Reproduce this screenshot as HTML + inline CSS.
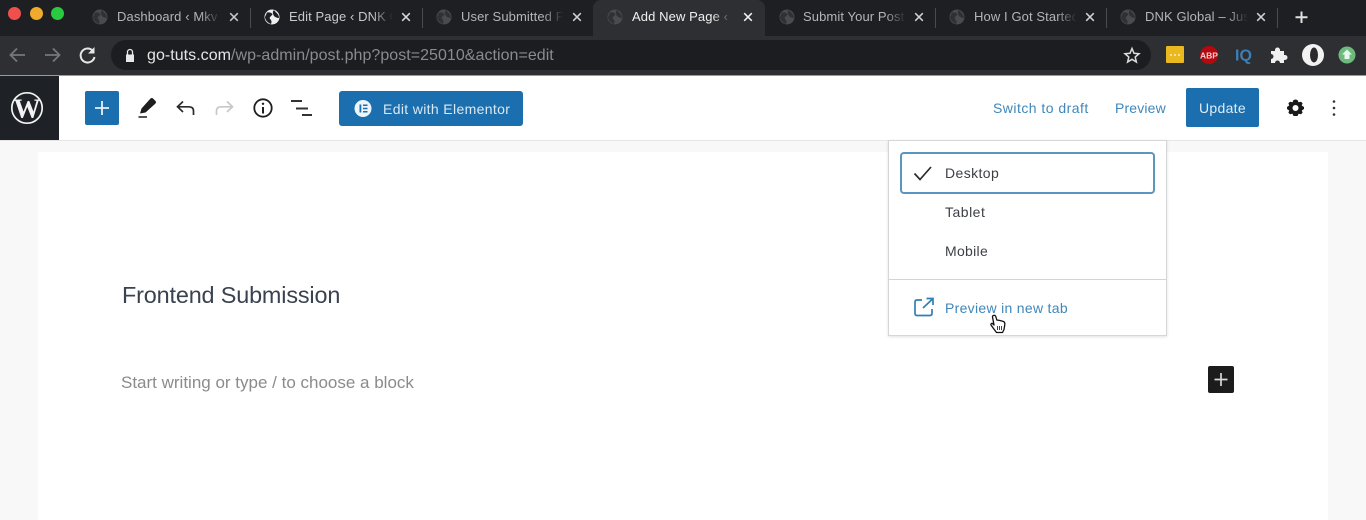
<!DOCTYPE html>
<html>
<head>
<meta charset="utf-8">
<style>
html,body{margin:0;padding:0;width:1366px;height:520px;overflow:hidden;background:#f8f8f8;font-family:"Liberation Sans",sans-serif}
#w{position:absolute;left:0;top:0;width:1366px;height:520px;overflow:hidden;background:#f8f8f8;filter:blur(.35px)}
.a{position:absolute}
.t{position:absolute;white-space:nowrap}
svg{position:absolute;overflow:visible}
.tab{position:absolute;top:9px;font-size:13px;letter-spacing:.1px;line-height:16px;color:#b4b5b8;white-space:nowrap;overflow:hidden;-webkit-mask-image:linear-gradient(to right,#000 80%,transparent);mask-image:linear-gradient(to right,#000 80%,transparent)}
.sep{position:absolute;top:8px;width:1px;height:20px;background:#4a4b4e}
</style>
</head>
<body>
<div id="w">
<div class="a" style="left:0;top:0;width:1366px;height:36px;background:#1e1f22"></div>
<div class="a" style="left:0;top:36px;width:1366px;height:39px;background:#2e2f32"></div>
<div class="a" style="left:593px;top:0;width:172px;height:40px;background:#2e2f32;border-radius:8px 8px 0 0"></div>

<div class="a" style="left:8px;top:7px;width:13px;height:13px;border-radius:50%;background:#f0504c"></div>
<div class="a" style="left:30px;top:7px;width:13px;height:13px;border-radius:50%;background:#f1ab2c"></div>
<div class="a" style="left:51px;top:7px;width:13px;height:13px;border-radius:50%;background:#2ac940"></div>

<svg style="left:0;top:0" width="1366" height="36">
<defs>
<path id="c" d="M-5-4.500C-2-5 0-4 .5-2.500-1-.5-3 0-2 2-.5 3 0 5-1 7-4 6-7 3-7 0ZM2-7C4-4 7-3 7 1 5 1 3 0 2-1 1-3 0-5 2-7Z"/>
<g id="g"><circle r="7.500" fill="#4a4b4e"/><use href="#c" fill="#303134"/></g>
<g id="ga"><circle r="7.500" fill="#f0f0f0"/><use href="#c" fill="#1e1f22"/></g>
<path id="x" d="M-3.800-3.800L3.800 3.800M3.800-3.800L-3.800 3.800" stroke-width="1.500" fill="none"/>
</defs>
<use href="#g" x="100" y="17"/>
<use href="#ga" x="272" y="17"/>
<use href="#g" x="444" y="17"/>
<use href="#g" x="615" y="17"/>
<use href="#g" x="787" y="17"/>
<use href="#g" x="957" y="17"/>
<use href="#g" x="1128" y="17"/>
<use href="#x" x="234" y="17" stroke="#c8c9cb"/>
<use href="#x" x="406" y="17" stroke="#d8d9db"/>
<use href="#x" x="577" y="17" stroke="#d0d1d3"/>
<use href="#x" x="748" y="17" stroke="#f0f0f0"/>
<use href="#x" x="919" y="17" stroke="#d0d1d3"/>
<use href="#x" x="1090" y="17" stroke="#d0d1d3"/>
<use href="#x" x="1261" y="17" stroke="#d0d1d3"/>
<path d="M1301.500 11.500V23M1295.500 17.200H1307.500" stroke="#e0e0e0" stroke-width="2" fill="none"/>
</svg>

<div class="tab" style="left:117px;width:104px">Dashboard ‹ Mkv Site</div>
<div class="tab" style="left:289px;width:104px;color:#c8c9cb">Edit Page ‹ DNK Global</div>
<div class="tab" style="left:461px;width:102px">User Submitted Posts</div>
<div class="tab" style="left:632px;width:100px;color:#f0f0f0">Add New Page ‹ DNK</div>
<div class="tab" style="left:803px;width:103px">Submit Your Post Here</div>
<div class="tab" style="left:974px;width:103px">How I Got Started With</div>
<div class="tab" style="left:1145px;width:103px">DNK Global – Just Another</div>
<div class="sep" style="left:250px"></div>
<div class="sep" style="left:422px"></div>
<div class="sep" style="left:935px"></div>
<div class="sep" style="left:1106px"></div>
<div class="sep" style="left:1277px"></div>

<div class="a" style="left:111px;top:40px;width:1040px;height:30px;border-radius:15px;background:#1c1d20"></div>
<svg style="left:0;top:36px" width="1366" height="39">
<path d="M25 19H11M17 12.500L10.500 19 17 25.500" stroke="#76777a" stroke-width="1.800" fill="none"/>
<path d="M45 19H59M53 12.500L59.500 19 53 25.500" stroke="#76777a" stroke-width="1.800" fill="none"/>
<path d="M93 15A7 7 0 1 0 94.500 21" stroke="#e6e6e6" stroke-width="2" fill="none"/><path d="M94.500 11V17.500H88Z" fill="#e6e6e6"/>
<path d="M126 18.500h8v7.500h-8z" fill="#e8e8e8"/><path d="M127.500 18.500V16a2.500 2.500 0 0 1 5 0v2.500" stroke="#e8e8e8" stroke-width="1.300" fill="none"/>
<path d="M1132 12.500L1134 17.300 1139 17.700 1135.200 21 1136.400 26 1132 23.300 1127.600 26 1128.800 21 1125 17.700 1130 17.300Z" stroke="#dcdcdc" stroke-width="1.500" fill="none"/>
<rect x="1166" y="10" width="18" height="17" rx="1" fill="#ecb81f"/><path d="M1170 19h2M1174 19h2M1178 19h2" stroke="#fff3c0" stroke-width="1.600"/>
<circle cx="1209" cy="19" r="9" fill="#b3090f"/>
<text x="1209" y="22.500" font-size="8.500" font-weight="bold" fill="#f6d0d0" text-anchor="middle" font-family="Liberation Sans">ABP</text>
<text x="1235" y="24.500" font-size="16" font-weight="bold" fill="#3d7fb8" font-family="Liberation Sans">IQ</text>
<path d="M1271 15h4v-1a2.500 2.500 0 0 1 5 0v1h4v4h1a2.500 2.500 0 0 1 0 5h-1v3h-4a2.500 2.500 0 0 0-5 0h-4v-4a2.500 2.500 0 0 0 0-5Z" fill="#f0f0f0"/>
<circle cx="1313" cy="19" r="11" fill="#f2f2f2"/><ellipse cx="1314" cy="19" rx="4" ry="7.500" fill="#2d2a2c"/>
<circle cx="1347" cy="19" r="8.500" fill="#6dbb7c"/><path d="M1347 13.500L1352 18.500H1349.500V23H1344.500V18.500H1342Z" fill="#e9f6ec"/>
</svg>
<div class="t" style="left:147px;top:47px;font-size:16px;line-height:18px;color:#e6e6e6;letter-spacing:.04px">go-tuts.com<span style="color:#8a8b8e">/wp-admin/post.php?post=25010&amp;action=edit</span></div>

<div class="a" style="left:0;top:75px;width:1366px;height:65px;background:#fff;border-bottom:1px solid #e6e6e6"></div>
<div class="a" style="left:0;top:75px;width:1366px;height:1px;background:#9a9a9a"></div>
<div class="a" style="left:0;top:76px;width:59px;height:64px;background:#1e2125"></div>
<svg style="left:0;top:75px" width="59" height="65">
<circle cx="27" cy="33" r="15.200" fill="none" stroke="#f2f2f2" stroke-width="1.700"/>
<text x="27" y="42.500" text-anchor="middle" font-family="Liberation Serif" font-size="27" font-weight="bold" fill="#f2f2f2">W</text>
</svg>

<div class="a" style="left:85px;top:91px;width:34px;height:34px;border-radius:2px;background:#1b6fae"></div>
<svg style="left:0;top:75px" width="340" height="65">
<path d="M102 26V40M95 33H109" stroke="#e8f1f8" stroke-width="1.800" fill="none"/>
<path d="M140 38.500L141.500 33.500 150.500 23.500Q152 22.500 153 23.500L155.500 26Q156.500 27 155.500 28.500L145.500 37.500Z" fill="#1e1e1e"/>
<path d="M138.500 42H147" stroke="#555" stroke-width="2"/>
<path d="M193.500 40V36C193.500 33 192 31.800 189 31.800H178M183 26.500L177.500 31.800 183 37" stroke="#2a2a2a" stroke-width="1.700" fill="none"/>
<path d="M216.500 40V36C216.500 33 218 31.800 221 31.800H232M227 26.500L232.500 31.800 227 37" stroke="#c8c8c8" stroke-width="1.700" fill="none"/>
<circle cx="263" cy="33" r="8.700" stroke="#1e1e1e" stroke-width="1.800" fill="none"/>
<path d="M263 32V38.500" stroke="#1e1e1e" stroke-width="2"/><circle cx="263" cy="28.800" r="1.200" fill="#1e1e1e"/>
<path d="M291 26H302M296 33.500H308M302 40H312" stroke="#333" stroke-width="2" fill="none"/>
</svg>

<div class="a" style="left:339px;top:91px;width:184px;height:35px;border-radius:3px;background:#1b6fae"></div>
<svg style="left:339px;top:91px" width="60" height="35">
<circle cx="24" cy="17.500" r="8.500" fill="#eef5fa"/>
<path d="M20.500 13.500h1.800v8h-1.800zM24 13.500h4.500v1.500H24zM24 16.700h4.500v1.500H24zM24 20h4.500v1.500H24z" fill="#1b6fae"/>
</svg>
<div class="t" style="left:383px;top:100px;font-size:14px;line-height:18px;color:#d9e8f3;letter-spacing:.35px">Edit with Elementor</div>

<div class="t" style="left:993px;top:99px;font-size:14px;line-height:18px;color:#3f87ba;letter-spacing:.47px">Switch to draft</div>
<div class="t" style="left:1115px;top:99px;font-size:14px;line-height:18px;color:#3f87ba;letter-spacing:.15px">Preview</div>
<div class="a" style="left:1186px;top:88px;width:73px;height:39px;border-radius:2px;background:#1b6fae"></div>
<div class="t" style="left:1199px;top:99px;font-size:14px;line-height:18px;color:#dfecf5;letter-spacing:.3px">Update</div>
<svg style="left:1280px;top:92px" width="70" height="32">
<path d="M15.500 7.500 17.500 8 18.500 10.300 21 9.700 22.600 11.300 21.700 13.500 24 15V17L21.800 18.500 22.600 20.800 21 22.300 18.600 21.700 17.500 24H13.500L12.500 21.700 10 22.300 8.400 20.800 9.200 18.500 7 17V15L9.200 13.500 8.400 11.300 10 9.700 12.500 10.300 13.500 8Z" fill="#1a1a1a"/>
<circle cx="15.500" cy="16" r="3" fill="#fff"/>
<circle cx="54" cy="9.500" r="1.300" fill="#333"/><circle cx="54" cy="16" r="1.300" fill="#333"/><circle cx="54" cy="22.500" r="1.300" fill="#333"/>
</svg>

<div class="a" style="left:38px;top:152px;width:1290px;height:368px;background:#fff"></div>
<div class="t" style="left:122px;top:280px;font-size:23.400px;line-height:30px;color:#3a4250;letter-spacing:-.15px">Frontend Submission</div>
<div class="t" style="left:121px;top:373px;font-size:17px;line-height:20px;color:#8b8b8b">Start writing or type / to choose a block</div>
<div class="a" style="left:1208px;top:366px;width:26px;height:27px;border-radius:2px;background:#1c1c1c"></div>
<svg style="left:1208px;top:366px" width="26" height="27"><path d="M13 7V20M6.500 13.500H19.500" stroke="#d8d8d8" stroke-width="1.700"/></svg>

<div class="a" style="left:888px;top:140px;width:277px;height:194px;background:#fff;border:1px solid #d6d6d6;box-shadow:0 1px 3px rgba(0,0,0,.12)"></div>
<div class="a" style="left:900px;top:152px;width:251px;height:38px;border:2px solid #5a96c0;border-radius:4px"></div>
<div class="a" style="left:889px;top:279px;width:277px;height:1px;background:#d4d4d4"></div>
<svg style="left:905px;top:160px" width="40" height="170">
<path d="M9.500 13.500L15 19.500 26 7" stroke="#2b2b2b" stroke-width="1.700" fill="none"/>
<path d="M17 140H12Q10 140 10 142V153.500Q10 155.500 12 155.500H25Q27 155.500 27 153.500V149" stroke="#2f80b5" stroke-width="1.700" fill="none"/>
<path d="M18 148L27.500 139M21.500 138.500H28V145" stroke="#2f80b5" stroke-width="1.700" fill="none"/>
</svg>
<div class="t" style="left:945px;top:165px;font-size:14px;line-height:17px;color:#3c3f45;letter-spacing:.4px">Desktop</div>
<div class="t" style="left:945px;top:204px;font-size:14px;line-height:17px;color:#3c3f45;letter-spacing:.5px">Tablet</div>
<div class="t" style="left:945px;top:243px;font-size:14px;line-height:17px;color:#3c3f45;letter-spacing:.3px">Mobile</div>
<div class="t" style="left:945px;top:300px;font-size:14px;line-height:17px;color:#3f87ba;letter-spacing:.3px">Preview in new tab</div>
<svg style="left:988px;top:313px" width="20" height="22" viewBox="0 0 20 22">
<path d="M5.500 2.500C6.500 2 7.500 2.500 7.800 3.500L8.800 7 12 7.500 15.500 8.500C16.500 9 17 10 16.800 11.500L16 16.500 14.500 19.500H8.500L5.500 15.500 3 12C2.500 11 3.500 10 4.500 10.500L6 12 4.500 4C4.400 3.300 4.800 2.700 5.500 2.500Z" fill="#fff" stroke="#111" stroke-width="1.300" stroke-linejoin="round"/>
<path d="M9.500 13V17M11.500 13V17M13.500 13V17" stroke="#333" stroke-width=".9"/>
</svg>
</div>
</body>
</html>
